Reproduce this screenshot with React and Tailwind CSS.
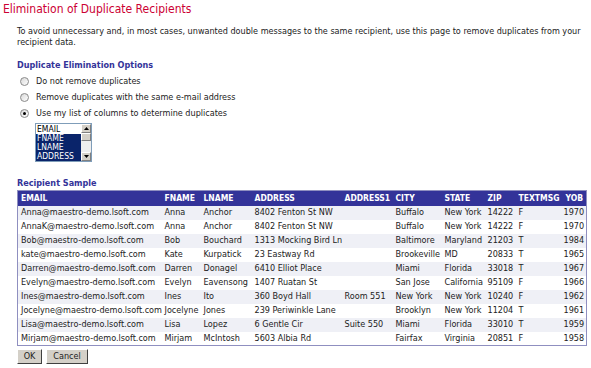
import React from 'react';

const rows = [
    ['Anna@maestro-demo.lsoft.com', 'Anna', 'Anchor', '8402 Fenton St NW', '', 'Buffalo', 'New York', '14222', 'F', '1970'],
    ['AnnaK@maestro-demo.lsoft.com', 'Anna', 'Anchor', '8402 Fenton St NW', '', 'Buffalo', 'New York', '14222', 'F', '1970'],
    ['Bob@maestro-demo.lsoft.com', 'Bob', 'Bouchard', '1313 Mocking Bird Ln', '', 'Baltimore', 'Maryland', '21203', 'T', '1984'],
    ['kate@maestro-demo.lsoft.com', 'Kate', 'Kurpatick', '23 Eastway Rd', '', 'Brookeville', 'MD', '20833', 'T', '1965'],
    ['Darren@maestro-demo.lsoft.com', 'Darren', 'Donagel', '6410 Elliot Place', '', 'Miami', 'Florida', '33018', 'T', '1967'],
    ['Evelyn@maestro-demo.lsoft.com', 'Evelyn', 'Eavensong', '1407 Ruatan St', '', 'San Jose', 'California', '95109', 'F', '1966'],
    ['Ines@maestro-demo.lsoft.com', 'Ines', 'Ito', '360 Boyd Hall', 'Room 551', 'New York', 'New York', '10240', 'F', '1962'],
    ['Jocelyne@maestro-demo.lsoft.com', 'Jocelyne', 'Jones', '239 Periwinkle Lane', '', 'Brooklyn', 'New York', '11204', 'T', '1961'],
    ['Lisa@maestro-demo.lsoft.com', 'Lisa', 'Lopez', '6 Gentle Cir', 'Suite 550', 'Miami', 'Florida', '33010', 'T', '1959'],
    ['Mirjam@maestro-demo.lsoft.com', 'Mirjam', 'McIntosh', '5603 Albia Rd', '', 'Fairfax', 'Virginia', '20851', 'F', '1958'],
];

const columns = ['EMAIL', 'FNAME', 'LNAME', 'ADDRESS', 'ADDRESS1', 'CITY', 'STATE', 'ZIP', 'TEXTMSG', 'YOB'];
const widths = ['w-[144px]', 'w-[39px]', 'w-[51px]', 'w-[90px]', 'w-[51px]', 'w-[49px]', 'w-[43px]', 'w-[31px]', 'w-[45px]', 'w-[26px]'];

const Radio = ({ checked }) => (
    <span className="relative inline-block w-[9px] h-[9px] rounded-full border border-[#8a8a8a] bg-gradient-to-br from-[#d8d8d8] to-white">
        {checked && <span className="absolute left-[2px] top-[2px] w-[3px] h-[3px] rounded-full bg-black" />}
    </span>
);

const App = () => {
    const options = [
        { label: 'Do not remove duplicates', checked: false },
        { label: 'Remove duplicates with the same e-mail address', checked: false },
        { label: 'Use my list of columns to determine duplicates', checked: true },
    ];

    return (
        <div className="w-[591px] h-[368px] bg-white text-[#222] overflow-hidden" style={{ fontFamily: '"DejaVu Sans Condensed", "DejaVu Sans", sans-serif', fontStretch: 'condensed' }}>
            <h1 className="pl-[3px] pt-[2px] text-[12px] leading-[14px] text-[#cc0033]">Elimination of Duplicate Recipients</h1>

            <div className="pl-[17px] pr-[8px]">
                <p className="mt-[10px] text-[9px] leading-[11px]">
                    To avoid unnecessary and, in most cases, unwanted double messages to the same recipient, use this page to remove duplicates from your recipient data.
                </p>

                <h2 className="mt-[12px] text-[9px] leading-[11px] font-bold text-[#333399]">Duplicate Elimination Options</h2>

                <div className="mt-[5px] flex flex-col gap-[5px]">
                    {options.map((o, i) => (
                        <label key={i} className="flex items-center gap-[7px] pl-[3px] h-[11px] text-[9px] leading-[11px]">
                            <Radio checked={o.checked} />
                            <span>{o.label}</span>
                        </label>
                    ))}
                </div>

                <div className="mt-[4px] ml-[18px] w-[57px] h-[39px] flex border border-[#7f9db9] bg-white">
                    <div className="flex-1 flex flex-col text-[8.5px] leading-[9px] pt-[1px]">
                        <div className="px-[1px] text-black">EMAIL</div>
                        <div className="px-[1px] bg-[#0a246a] text-white">FNAME</div>
                        <div className="px-[1px] bg-[#0a246a] text-white">LNAME</div>
                        <div className="px-[1px] bg-[#0a246a] text-white">ADDRESS</div>
                    </div>
                    <div className="w-[10px] flex flex-col bg-[#eeeeee]">
                        <div className="h-[9px] bg-[#d4d0c8] border border-t-white border-l-white border-r-[#808080] border-b-[#808080] flex items-center justify-center">
                            <svg width="5" height="3" viewBox="0 0 5 3"><path d="M2.5 0 L5 3 L0 3 Z" fill="#000" /></svg>
                        </div>
                        <div className="h-[8px] bg-[#d4d0c8] border border-t-white border-l-white border-r-[#808080] border-b-[#808080]" />
                        <div className="flex-1" />
                        <div className="h-[9px] bg-[#d4d0c8] border border-t-white border-l-white border-r-[#808080] border-b-[#808080] flex items-center justify-center">
                            <svg width="5" height="3" viewBox="0 0 5 3"><path d="M0 0 L5 0 L2.5 3 Z" fill="#000" /></svg>
                        </div>
                    </div>
                </div>

                <h2 className="mt-[16px] text-[9px] leading-[11px] font-bold text-[#333399]">Recipient Sample</h2>

                <table className="mt-[1px] w-[570px] table-fixed border-collapse border border-[#8f8fc0] text-[9px]">
                    <thead>
                        <tr className="bg-[#333399] text-white h-[15px]">
                            {columns.map((c, i) => (
                                <th key={c} className={`${widths[i]} px-[3px] py-0 font-bold text-[8.5px] text-left whitespace-nowrap ${i === 9 ? 'text-right' : ''}`}>{c}</th>
                            ))}
                        </tr>
                    </thead>
                    <tbody>
                        {rows.map((r, ri) => (
                            <tr key={ri} className={`h-[14px] ${ri % 2 === 0 ? 'bg-[#eff0f6]' : 'bg-white'}`}>
                                {r.map((v, ci) => (
                                    <td key={ci} className={`px-[3px] py-0 whitespace-nowrap overflow-hidden ${ci === 9 ? 'text-right' : ''}`}>{v}</td>
                                ))}
                            </tr>
                        ))}
                    </tbody>
                </table>

                <div className="mt-[3px] flex gap-[4px] text-[9px]">
                    <button className="w-[25px] h-[15px] bg-[#d4d0c8] border border-t-white border-l-white border-r-[#404040] border-b-[#404040] text-[#222]">OK</button>
                    <button className="w-[42px] h-[15px] bg-[#d4d0c8] border border-t-white border-l-white border-r-[#404040] border-b-[#404040] text-[#222]">Cancel</button>
                </div>
            </div>
        </div>
    );
};

export default App;
